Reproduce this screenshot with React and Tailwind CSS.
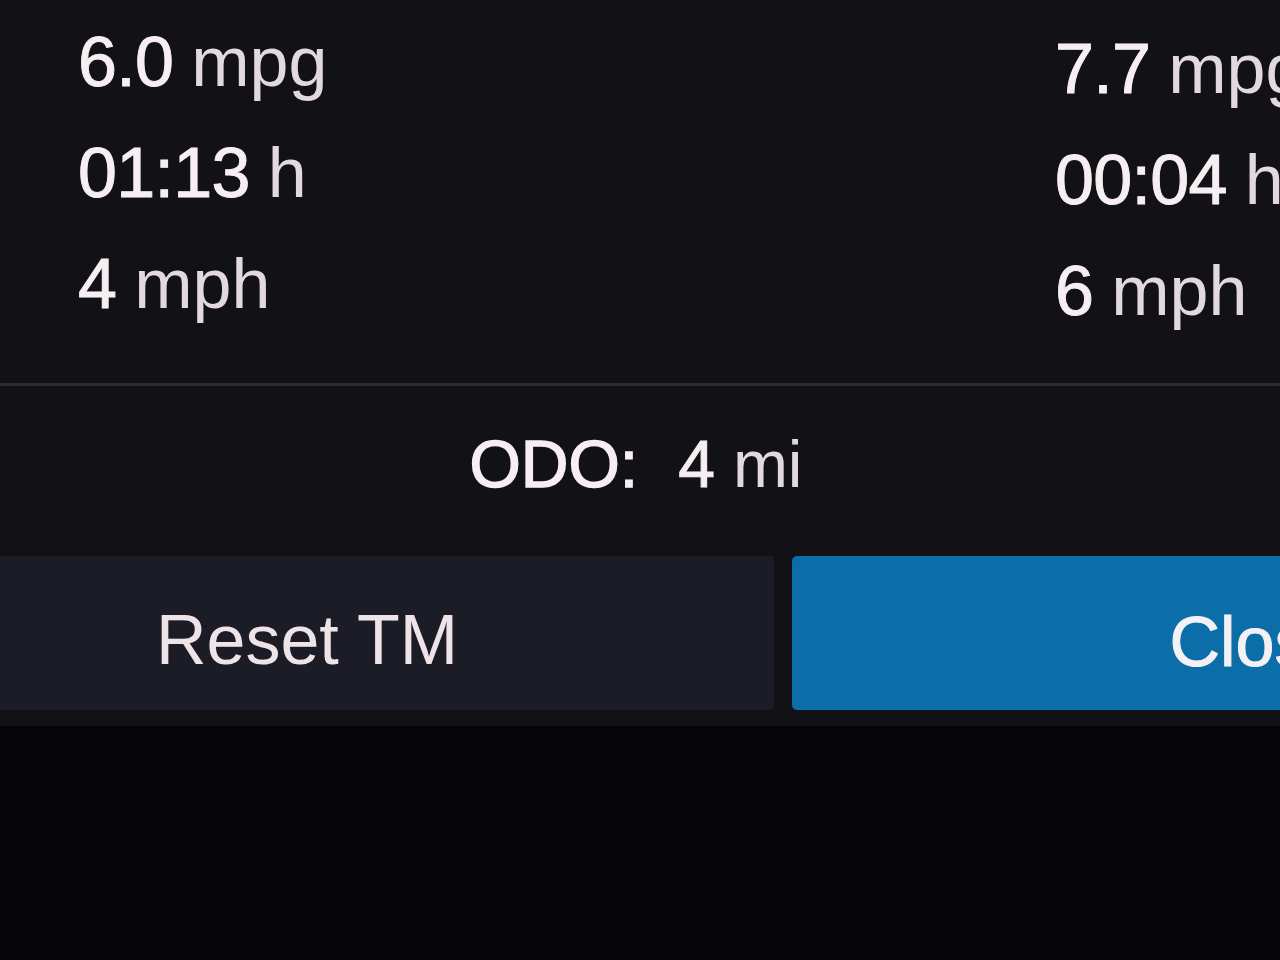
import React from 'react';

const leftStats = [
  { value: '6.0', unit: 'mpg' },
  { value: '01:13', unit: 'h' },
  { value: '4', unit: 'mph' },
];

const rightStats = [
  { value: '7.7', unit: 'mpg' },
  { value: '00:04', unit: 'h' },
  { value: '6', unit: 'mph' },
];

const StatColumn = ({ stats, className }) => (
  <div className={className}>
    {stats.map((s) => (
      <div key={s.value} className="h-[111px] leading-[111px] whitespace-nowrap">
        <span className="text-[#f6eef1] tracking-[-0.01em] [-webkit-text-stroke:1px_#f6eef1]">{s.value}</span>
        <span className="ml-[18px] text-[#e2d9de]">{s.unit}</span>
      </div>
    ))}
  </div>
);

const App = () => {
  return (
    <div
      className="w-[1280px] h-[960px] overflow-hidden bg-[#060608] text-[70px]"
      style={{ fontFamily: '"Liberation Sans", Arial, sans-serif' }}
    >
      <div className="bg-[#111116] h-[726px] flex flex-col">
        {/* Trip stats */}
        <div className="flex h-[383px]">
          <StatColumn stats={leftStats} className="w-[1055px] shrink-0 pl-[78px] pt-[7px]" />
          <StatColumn stats={rightStats} className="flex-1 pt-[14px]" />
        </div>

        <div className="h-[3px] bg-[#2a2a31]" />

        {/* Odometer */}
        <div className="w-[1272px] h-[170px] flex items-center justify-center pb-[14px]">
          <div className="text-[66px] leading-none whitespace-nowrap text-[#f6eef1]">
            <span className="[-webkit-text-stroke:1.5px_#f6eef1]">ODO:</span>
            <span className="ml-[40px] [-webkit-text-stroke:1px_#f6eef1]">4</span>
            <span className="ml-[18px] text-[#e2d9de]">mi</span>
          </div>
        </div>

        {/* Buttons */}
        <div className="flex gap-[18px] -ml-[160px] w-[1886px] h-[154px]">
          <button className="w-[934px] h-full rounded-[4px] bg-[#1b1c25] text-[#eee4e8] text-[70px] leading-none pt-[14px]">
            Reset TM
          </button>
          <button className="w-[934px] h-full rounded-[5px] bg-[#0b6ea8] text-[#f4f1f4] text-[70px] leading-none pt-[18px] [-webkit-text-stroke:1px_#f4f1f4]">
            Close
          </button>
        </div>
      </div>
    </div>
  );
};

export default App;
